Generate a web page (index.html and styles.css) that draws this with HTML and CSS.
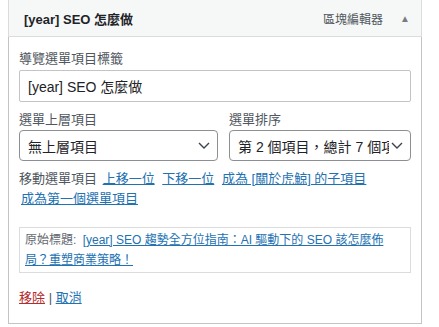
FILE: index.html
```html
<!DOCTYPE html>
<html lang="zh-Hant">
<head>
    <meta charset="utf-8">
    <title>選單項目</title>
    <link rel="stylesheet" href="styles.css">
</head>
<body>
    <div class="menu-item">
        <div class="item-handle">
            <span class="item-title">[year] SEO 怎麼做</span>
            <span class="item-controls">
                <span class="item-type">區塊編輯器</span>
                <span class="item-arrow">▲</span>
            </span>
        </div>
        <div class="item-settings">
            <div class="field">
                <label for="title">導覽選單項目標籤</label>
                <input type="text" id="title" class="text-input" value="[year] SEO 怎麼做">
            </div>
            <div class="field-row">
                <div class="field">
                    <label>選單上層項目</label>
                    <div class="select">
                        <span class="select-value">無上層項目</span>
                        <svg class="chevron" width="12" height="7" viewBox="0 0 12 7"><path d="M1 1 L6 6 L11 1" fill="none" stroke="#3c434a" stroke-width="1.4"/></svg>
                    </div>
                </div>
                <div class="field">
                    <label>選單排序</label>
                    <div class="select">
                        <span class="select-value">第 2 個項目，總計 7 個項目</span>
                        <svg class="chevron" width="12" height="7" viewBox="0 0 12 7"><path d="M1 1 L6 6 L11 1" fill="none" stroke="#3c434a" stroke-width="1.4"/></svg>
                    </div>
                </div>
            </div>
            <div class="field-move">
                移動選單項目
                <a href="#">上移一位</a>
                <a href="#">下移一位</a>
                <a href="#">成為 [關於虎鯨] 的子項目</a>
                <a href="#">成為第一個選單項目</a>
            </div>
            <div class="link-to-original">
                原始標題: <a href="#">[year] SEO 趨勢全方位指南：AI 驅動下的 SEO 該怎麼佈局？重塑商業策略！</a>
            </div>
            <div class="actions">
                <a href="#" class="delete">移除</a> <span class="sep">|</span> <a href="#">取消</a>
            </div>
        </div>
    </div>
</body>
</html>
```

FILE: styles.css
```css
body {
    margin: 0;
    background: #fff;
    font-family: "Liberation Sans", Arial, "Noto Sans CJK TC", sans-serif;
    font-size: 13px;
    color: #1d2327;
}

.menu-item {
    width: 414px;
    margin-left: 8px;
}

.item-handle {
    display: flex;
    justify-content: space-between;
    align-items: center;
    height: 36px;
    padding: 0 11px 0 15px;
    background: #f6f7f7;
    border: 1px solid #dcdcde;
    border-top: none;
}

.item-title {
    font-weight: bold;
    font-size: 13px;
    color: #1d2327;
}

.item-controls {
    display: flex;
    align-items: center;
}

.item-type {
    font-size: 12px;
    color: #50575e;
}

.item-arrow {
    margin-left: 17px;
    font-size: 10px;
    color: #787c82;
}

.item-settings {
    border: 1px solid #c3c4c7;
    border-top: none;
    padding: 12px 10px 15px;
}

.field {
    min-width: 0;
}

.field label {
    display: block;
    line-height: 20px;
    color: #50575e;
    margin-bottom: 1px;
}

.text-input {
    display: block;
    box-sizing: border-box;
    width: 100%;
    height: 32px;
    margin: 0;
    padding: 0 8px;
    border: 1px solid #c3c4c7;
    border-radius: 2px;
    font-family: inherit;
    font-size: 14px;
    color: #1d2327;
}

.field-row {
    display: grid;
    grid-template-columns: 199px minmax(0, 1fr);
    column-gap: 11px;
    margin-top: 8px;
}

.field-row label {
    margin-bottom: 0;
}

.select {
    display: flex;
    align-items: center;
    height: 29px;
    padding: 0 7px 0 8px;
    border: 1px solid #8c8f94;
    border-radius: 4px;
    font-size: 14px;
    color: #1d2327;
}

.select-value {
    flex: 1;
    min-width: 0;
    white-space: nowrap;
    overflow: hidden;
}

.chevron {
    flex: none;
    margin-left: 2px;
}

.field-move {
    margin-top: 8px;
    line-height: 19.5px;
    color: #50575e;
}

.field-move a {
    margin: 0 2px;
    white-space: nowrap;
}

a {
    color: #2271b1;
}

.link-to-original {
    margin: 19px 0 15px;
    padding: 3px 20px 2px 5px;
    border: 1px solid #dcdcde;
    font-size: 12px;
    line-height: 19.5px;
    color: #646970;
}

.link-to-original a {
    margin-left: 3px;
}

.actions {
    line-height: 20px;
}

.actions .delete {
    color: #b32d2e;
}

.sep {
    color: #50575e;
}
```
